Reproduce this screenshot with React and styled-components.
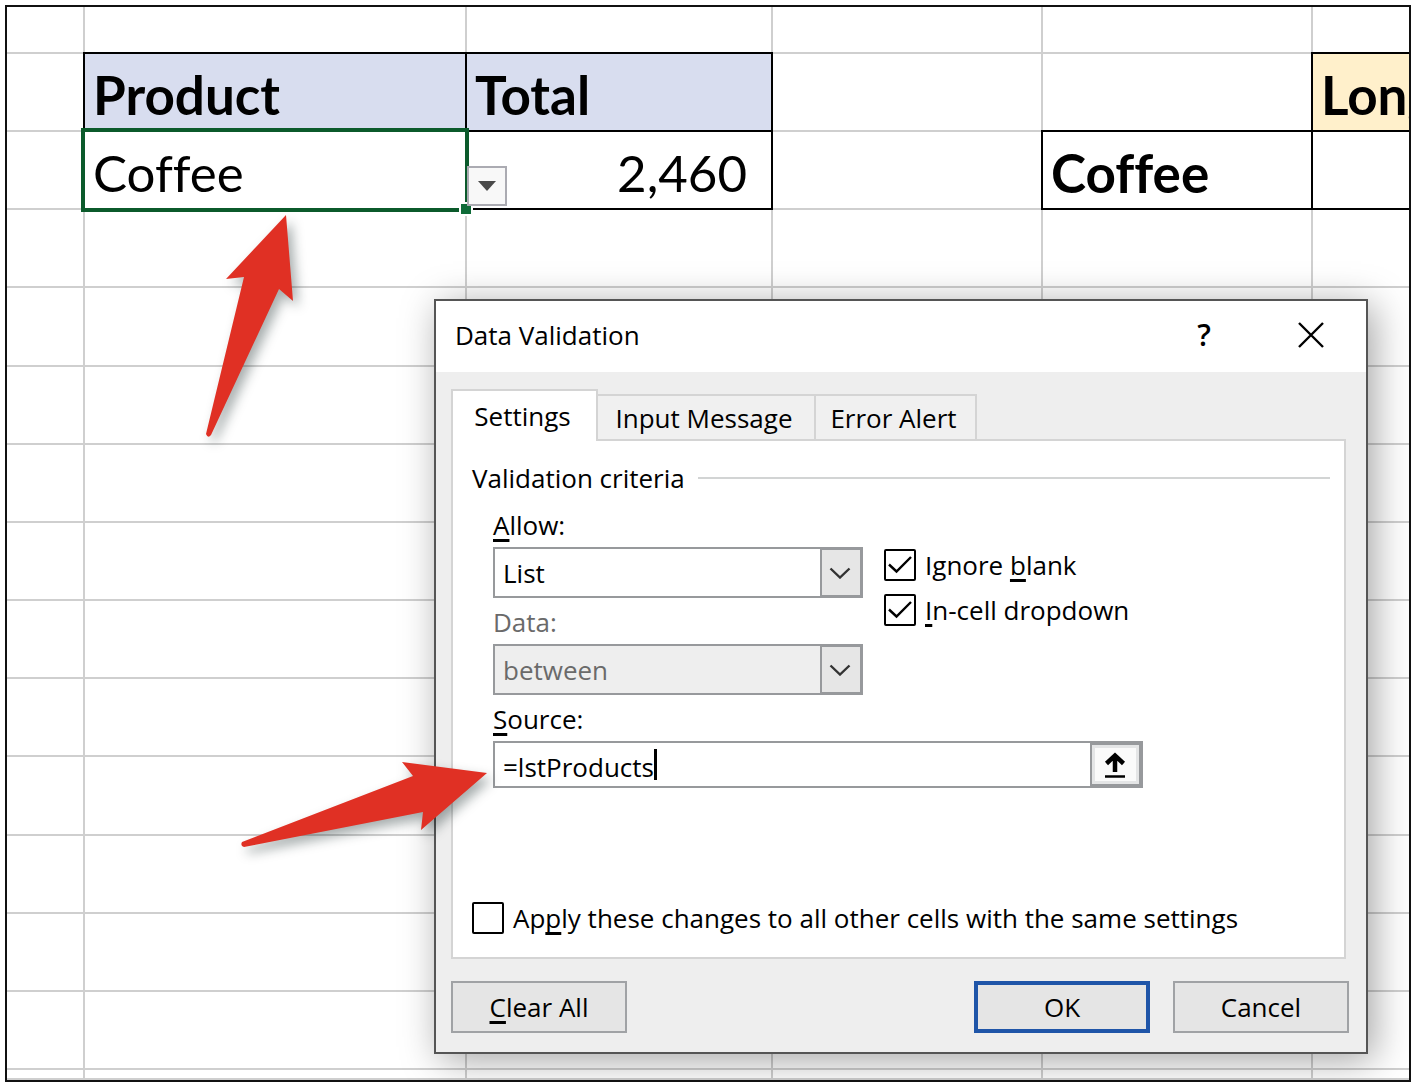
import React from 'react';
import styled, { createGlobalStyle, css } from 'styled-components';

const GlobalStyle = createGlobalStyle`
  *, *::before, *::after { box-sizing: border-box; }
  body { margin: 0; background: #fff; color: #000; }
  button, input, select { font: inherit; color: inherit; margin: 0; }
`;

const Page = styled.main`
  display: flex;
  min-height: 100vh;
  padding: 5px 7px 8px 5px;
`;

const Frame = styled.div`
  position: relative;
  display: flex;
  flex: 1;
  min-width: 0;
  overflow: hidden;
  border: 2px solid #111;
`;

/* Sheet */

const Sheet = styled.table`
  display: flex;
  flex: 1;
  min-width: 0;
  font-family: Lato, 'Liberation Sans', sans-serif;
  line-height: 60px;
  font-variant-ligatures: none;
`;

const SheetBody = styled.tbody`
  display: grid;
  flex: 1;
  min-width: 0;
  grid-template-rows: 47px repeat(13, minmax(60px, 1fr)) 10px;
`;

const SheetRow = styled.tr`
  display: grid;
  grid-template-columns: 78px 382px 306px 270px 270px minmax(0, 1fr);
`;

const fills = { blue: '#d8ddef', cream: '#fff0cb' };

const Cell = styled.td`
  display: flex;
  align-items: center;
  justify-content: ${(p) => (p.$end ? 'flex-end' : 'flex-start')};
  min-width: 0;
  padding: 6px 24px 0 8px;
  white-space: nowrap;
  font-size: ${(p) => (p.$bold ? 53 : 51)}px;
  font-weight: ${(p) => (p.$bold ? 700 : 400)};
  background: ${(p) => fills[p.$fill] || 'transparent'};
  border: 0 solid #cfcfcf;
  border-width: 0 2px 2px 0;
  &:last-child { border-right-width: 0; overflow: hidden; padding-right: 0; }
  ${(p) =>
    p.$boxed &&
    css`
      border-color: #000;
      box-shadow: -2px 0 0 #000, 0 -2px 0 #000, -2px -2px 0 #000;
      &:last-child { overflow-x: clip; overflow-y: visible; }
    `}
  ${(p) =>
    p.$selected &&
    css`
      position: relative;
      z-index: 1;
      &::before {
        content: '';
        position: absolute;
        inset: -4px;
        border: 4px solid #0b5a2b;
      }
      &::after {
        content: '';
        position: absolute;
        right: -8px;
        bottom: -8px;
        width: 14px;
        height: 14px;
        border: 2px solid #fff;
        background: #0f6b38;
      }
    `}
`;

const CellDropdown = styled.button`
  position: absolute;
  right: -42px;
  bottom: 2px;
  z-index: 2;
  display: flex;
  align-items: center;
  justify-content: center;
  width: 40px;
  height: 40px;
  padding: 0;
  border: 2px solid #ababb2;
  background: #f8f8f8;
`;

/* Dialog */

const Dialog = styled.section`
  position: absolute;
  top: 292px;
  left: 427px;
  width: 934px;
  border: 2px solid #555;
  background: #eee;
  box-shadow: 6px 6px 36px rgba(0, 0, 0, 0.36);
  font-family: 'Open Sans', 'Noto Sans', sans-serif;
  font-size: 26px;
  line-height: 34px;
`;

const TitleBar = styled.header`
  display: flex;
  align-items: center;
  height: 71px;
  padding: 0 35px 4px 19px;
  background: #fff;
`;

const Title = styled.h1`
  flex: 1;
  margin: 0;
  font-size: 26px;
  font-weight: 400;
`;

const TitleButton = styled.button`
  display: flex;
  align-items: center;
  justify-content: center;
  width: 40px;
  height: 40px;
  margin-left: 67px;
  padding: 0;
  border: 0;
  background: none;
  font-size: 30px;
  font-weight: 600;
`;

const DialogBody = styled.form`
  padding: 17px 17px 19px 15px;
`;

const Tabs = styled.div`
  display: flex;
  align-items: flex-end;
`;

const Tab = styled.button`
  height: ${(p) => (p.$active ? 52 : 45)}px;
  width: ${(p) => p.$width}px;
  padding: 0 4px 0 0;
  border: 2px solid #d4d4d4;
  border-left-width: ${(p) => (p.$active ? 2 : 0)}px;
  border-bottom: 0;
  background: ${(p) => (p.$active ? '#fff' : '#f0f0f0')};
  ${(p) =>
    p.$active &&
    css`
      position: relative;
      z-index: 1;
      margin-bottom: -2px;
    `}
`;

const Panel = styled.div`
  display: flex;
  flex-direction: column;
  margin-right: 3px;
  padding: 20px 14px 22px 19px;
  border: 2px solid #d4d4d4;
  background: #fff;
`;

const GroupHeading = styled.div`
  display: flex;
  align-items: center;
  gap: 13px;
  &::after {
    content: '';
    flex: 1;
    height: 2px;
    background: #d2d4d4;
  }
`;

const Criteria = styled.div`
  display: grid;
  grid-template-columns: 370px 1fr;
  column-gap: 21px;
  padding: 6px 0 0 21px;
`;

const Field = styled.div`
  display: flex;
  flex-direction: column;
  grid-column: ${(p) => (p.$wide ? '1 / -1' : '1')};
`;

const FieldLabel = styled.label`
  height: 46px;
  padding-top: 7px;
  color: ${(p) => (p.$dim ? '#6a6a6a' : '#000')};
`;

const Mnemonic = styled.u`
  text-decoration-thickness: 3px;
  text-underline-offset: 4px;
  text-decoration-skip-ink: none;
`;

const SelectBox = styled.div`
  position: relative;
  height: 51px;
`;

const Select = styled.select`
  width: 100%;
  height: 100%;
  padding: 0 50px 0 8px;
  border: 2px solid #97999c;
  border-radius: 0;
  appearance: none;
  background: #fff;
  opacity: 1;
  &:disabled { background: #eee; color: #6a6a6a; opacity: 1; }
`;

const SelectArrow = styled.span`
  position: absolute;
  top: 0;
  right: 0;
  bottom: 0;
  display: flex;
  align-items: center;
  justify-content: center;
  width: 43px;
  padding-right: 3px;
  border: 3px solid #97999c;
  border-left-width: 2px;
  background: #e6e6e6;
  pointer-events: none;
`;

const SourceBox = styled.div`
  display: flex;
  align-items: stretch;
  width: 650px;
  height: 47px;
  border: 2px solid #97999c;
  background: #fff;
`;

const SourceInput = styled.input`
  field-sizing: content;
  min-width: 20px;
  padding: 4px 0 0 8px;
  border: 0;
  outline: 0;
  background: none;
`;

const Caret = styled.span`
  width: 3px;
  height: 31px;
  align-self: center;
  background: #000;
`;

const RangeButton = styled.button`
  display: flex;
  align-items: center;
  justify-content: center;
  width: 51px;
  margin-left: auto;
  padding: 0 2px 0 0;
  border: 2px solid #97999c;
  background: #fafafa;
  box-shadow: inset 0 0 0 3px #e4e5e6;
`;

const Options = styled.div`
  display: flex;
  flex-direction: column;
  gap: 11px;
  grid-column: 2;
  grid-row: 1 / span 2;
  padding-top: 47px;
`;

const CheckLabel = styled.label`
  display: flex;
  align-items: center;
  gap: 9px;
`;

const CheckBox = styled.span`
  position: relative;
  display: flex;
  width: 32px;
  height: 32px;
  svg { position: absolute; inset: 0; pointer-events: none; }
`;

const CheckInput = styled.input`
  width: 100%;
  height: 100%;
  border: 2px solid #000;
  border-radius: 2px;
  appearance: none;
  background: #fff;
`;

const ApplyRow = styled.div`
  margin-top: 113px;
`;

const Footer = styled.footer`
  display: flex;
  gap: 23px;
  margin-top: 22px;
`;

const FooterButton = styled.button`
  width: 176px;
  height: 52px;
  padding: 0;
  border: ${(p) => (p.$primary ? '4px solid #1f55a8' : '2px solid #a0a2a5')};
  background: #e5e5e5;
  &:first-child { margin-right: auto; }
`;

const Arrows = styled.svg`
  position: absolute;
  top: -7px;
  left: -7px;
  pointer-events: none;
  filter: drop-shadow(5px 6px 6px rgba(0, 20, 20, 0.35));
`;

const columns = ['A', 'B', 'C', 'D', 'E', 'F'];

const cells = {
  '1B': { text: 'Product', $bold: true, $fill: 'blue', $boxed: true },
  '1C': { text: 'Total', $bold: true, $fill: 'blue', $boxed: true },
  '1F': { text: 'Long', $bold: true, $fill: 'cream', $boxed: true },
  '2B': { text: 'Coffee', $boxed: true, $selected: true },
  '2C': { text: '2,460', $boxed: true, $end: true },
  '2E': { text: 'Coffee', $bold: true, $boxed: true },
  '2F': { text: '', $boxed: true },
};

function Spreadsheet() {
  return (
    <Sheet>
      <SheetBody>
        {Array.from({ length: 15 }, (_, row) => (
          <SheetRow key={row}>
            {columns.map((col) => {
              const { text, ...look } = cells[row + col] || {};
              return (
                <Cell key={col} {...look}>
                  {text}
                  {look.$selected && (
                    <CellDropdown type="button" aria-label="Open list">
                      <svg width="18" height="10" viewBox="0 0 18 10">
                        <path d="M0 0H18L9 10Z" fill="#4a4a4a" />
                      </svg>
                    </CellDropdown>
                  )}
                </Cell>
              );
            })}
          </SheetRow>
        ))}
      </SheetBody>
    </Sheet>
  );
}

function Dropdown({ id, value, disabled }) {
  return (
    <SelectBox>
      <Select id={id} defaultValue={value} disabled={disabled}>
        <option>{value}</option>
      </Select>
      <SelectArrow>
        <svg width="22" height="12" viewBox="0 0 22 12" fill="none">
          <path d="M1.500 1.500L11 10.500L20.500 1.500" stroke="#333" strokeWidth="2.400" />
        </svg>
      </SelectArrow>
    </SelectBox>
  );
}

function Check({ checked, children }) {
  return (
    <CheckLabel>
      <CheckBox>
        <CheckInput type="checkbox" defaultChecked={checked} />
        {checked && (
          <svg width="32" height="32" viewBox="0 0 32 32" fill="none">
            <path d="M5 15.500L12.500 22.500L27 8" stroke="#000" strokeWidth="2.400" />
          </svg>
        )}
      </CheckBox>
      <span>{children}</span>
    </CheckLabel>
  );
}

function DataValidation() {
  return (
    <Dialog role="dialog" aria-labelledby="dialog-title">
      <TitleBar>
        <Title id="dialog-title">Data Validation</Title>
        <TitleButton type="button">?</TitleButton>
        <TitleButton type="button" aria-label="Close">
          <svg width="26" height="26" viewBox="0 0 26 26" fill="none">
            <path d="M1 1L25 25M25 1L1 25" stroke="#000" strokeWidth="2.400" />
          </svg>
        </TitleButton>
      </TitleBar>
      <DialogBody onSubmit={(e) => e.preventDefault()}>
        <Tabs role="tablist">
          <Tab type="button" role="tab" aria-selected="true" $active $width={147}>Settings</Tab>
          <Tab type="button" role="tab" $width={218}>Input Message</Tab>
          <Tab type="button" role="tab" $width={161}>Error Alert</Tab>
        </Tabs>
        <Panel role="tabpanel">
          <GroupHeading>Validation criteria</GroupHeading>
          <Criteria>
            <Field>
              <FieldLabel htmlFor="allow"><Mnemonic>A</Mnemonic>llow:</FieldLabel>
              <Dropdown id="allow" value="List" />
            </Field>
            <Options>
              <Check checked>Ignore <Mnemonic>b</Mnemonic>lank</Check>
              <Check checked><Mnemonic>I</Mnemonic>n-cell dropdown</Check>
            </Options>
            <Field>
              <FieldLabel htmlFor="data" $dim>Data:</FieldLabel>
              <Dropdown id="data" value="between" disabled />
            </Field>
            <Field $wide>
              <FieldLabel htmlFor="source"><Mnemonic>S</Mnemonic>ource:</FieldLabel>
              <SourceBox>
                <SourceInput id="source" type="text" defaultValue="=lstProducts" />
                <Caret />
                <RangeButton type="button" aria-label="Pick range">
                  <svg width="22" height="26" viewBox="0 0 22 26" fill="none" stroke="#000">
                    <path d="M11 20V4M2.500 11.500L11 3.500L19.500 11.500" strokeWidth="4.500" />
                    <path d="M1 24.500H21" strokeWidth="2.500" />
                  </svg>
                </RangeButton>
              </SourceBox>
            </Field>
          </Criteria>
          <ApplyRow>
            <Check>Ap<Mnemonic>p</Mnemonic>ly these changes to all other cells with the same settings</Check>
          </ApplyRow>
        </Panel>
        <Footer>
          <FooterButton type="button"><Mnemonic>C</Mnemonic>lear All</FooterButton>
          <FooterButton type="submit" $primary>OK</FooterButton>
          <FooterButton type="button">Cancel</FooterButton>
        </Footer>
      </DialogBody>
    </Dialog>
  );
}

export default function App() {
  return (
    <>
      <GlobalStyle />
      <Page>
        <Frame>
          <Spreadsheet />
          <DataValidation />
          <Arrows width="540" height="900" viewBox="0 0 540 900" fill="#e03024" aria-hidden="true">
            <path d="M286 215L226 279L244 277L206 434Q208 439 211 435L279 289L293 301Z" />
            <path d="M487 773L402 762L413 776L242 842Q240 846 244 847L423 812L421 830Z" />
          </Arrows>
        </Frame>
      </Page>
    </>
  );
}
